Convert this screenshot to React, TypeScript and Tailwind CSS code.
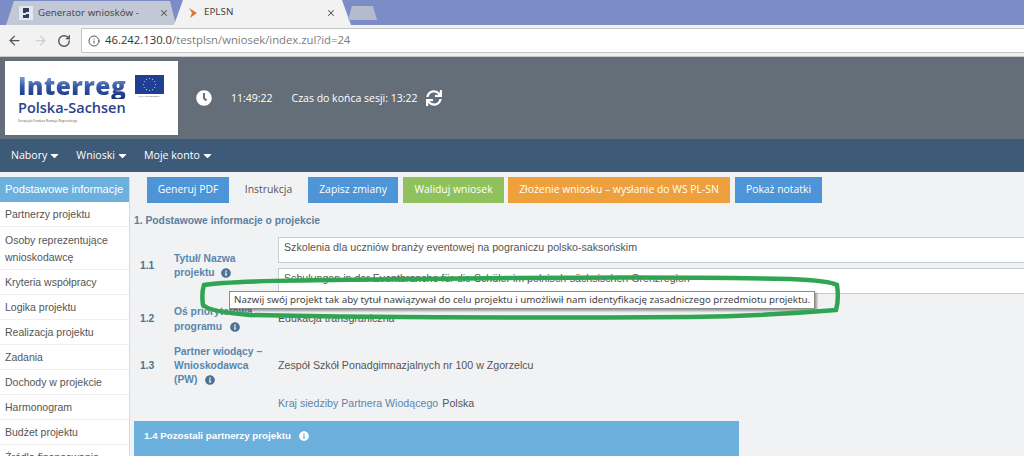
import { ArrowLeft, ArrowRight, Info, RotateCw, X } from 'lucide-react';
import { FaCaretDown, FaClock, FaInfoCircle, FaSync } from 'react-icons/fa';

const menu = ['Nabory', 'Wnioski', 'Moje konto'];

const sideItems = [
  'Partnerzy projektu',
  'Osoby reprezentujące wnioskodawcę',
  'Kryteria współpracy',
  'Logika projektu',
  'Realizacja projektu',
  'Zadania',
  'Dochody w projekcie',
  'Harmonogram',
  'Budżet projektu',
  'Źródła finansowania',
];

function EuFlag() {
  const stars = Array.from({ length: 12 }, (_, i) => {
    const a = (i * Math.PI) / 6;
    return { x: 14.5 + 6 * Math.cos(a), y: 9.5 + 6 * Math.sin(a) };
  });
  return (
    <svg width="29" height="19" viewBox="0 0 29 19" className="block">
      <rect width="29" height="19" fill="#1f3f94" />
      {stars.map((s, i) => (
        <circle key={i} cx={s.x} cy={s.y} r="0.6" fill="#e8d44a" />
      ))}
    </svg>
  );
}

function Logo() {
  return (
    <div className="ml-[5px] flex h-[74px] w-[173px] bg-white pl-[13px] pt-[12px]">
      <div className="w-[110px]">
        <div className="h-[26px] bg-gradient-to-b from-[#9dbbe2] via-[#3a5ca8] to-[#14307f] bg-clip-text text-[24.5px] font-extrabold leading-[26px] tracking-[0.5px] text-transparent [font-family:'Open_Sans',sans-serif]">
          Interreg
        </div>
        <div className="whitespace-nowrap text-[14.5px] font-semibold leading-[17px] text-[#2a4488] [font-family:'Open_Sans',sans-serif]">
          Polska-Sachsen
        </div>
        <div className="mt-[3px] whitespace-nowrap text-[3px] leading-[4px] text-[#555] [font-family:'Open_Sans',sans-serif]">
          Europejski Fundusz Rozwoju Regionalnego
        </div>
      </div>
      <div className="ml-[7px] mt-[2px]">
        <EuFlag />
        <div className="mt-[1px] whitespace-nowrap text-center text-[2.5px] leading-[3px] text-[#555]">UNIA EUROPEJSKA</div>
      </div>
    </div>
  );
}

function Browser() {
  return (
    <>
      <div className="flex h-[25px] items-end bg-[#7b8cc6] pl-[6px] [font-family:'Noto_Sans',sans-serif]">
        <div className="flex h-[24px] w-[170px] items-center whitespace-nowrap bg-[#c3c8d6] pl-[13px] pr-[7px] text-[9.8px] text-[#4a4a4a] [clip-path:polygon(8px_0,calc(100%-6px)_0,100%_100%,0_100%)]">
          <svg width="14" height="14" viewBox="0 0 14 14" className="mr-[5px] shrink-0">
            <rect width="14" height="14" fill="#e4e7ee" />
            <path d="M4 2h6v4H7v2h3v4H4V9h3V7H4z" fill="#2d4263" />
          </svg>
          <span className="flex-1">Generator wniosków -</span>
          <X size={10} strokeWidth={2.5} className="text-[#555]" />
        </div>
        <div className="-ml-[2px] flex h-[25px] w-[177px] items-center bg-[#f2f2f2] pl-[13px] pr-[15px] text-[9.8px] text-[#444] [clip-path:polygon(9px_0,calc(100%-9px)_0,100%_100%,0_100%)]">
          <svg width="12" height="14" viewBox="0 0 12 14" className="mr-[5px] shrink-0">
            <path d="M2 2l8 5-7 5 2-5z" fill="#d9783a" />
          </svg>
          <span className="flex-1">EPLSN</span>
          <X size={10} strokeWidth={2.5} className="text-[#555]" />
        </div>
        <div className="-ml-[3px] mb-[5px] h-[14px] w-[29px] bg-[#b4bbcd] [clip-path:polygon(4px_0,calc(100%-4px)_0,100%_100%,0_100%)]" />
      </div>
      <div className="flex h-[32px] items-center border-b border-[#c9c9c9] bg-[#f2f2f2] pl-[7px]">
        <ArrowLeft size={15} strokeWidth={2} className="text-[#555]" />
        <ArrowRight size={15} strokeWidth={2} className="ml-[11px] text-[#cfcfcf]" />
        <RotateCw size={14} strokeWidth={2.4} className="ml-[9px] text-[#555]" />
        <div className="ml-[10px] flex h-[25px] flex-1 items-center rounded-l-[2px] border border-r-0 border-[#c4c4c4] bg-white pl-[6px] text-[11.3px] [font-family:'Open_Sans',sans-serif]">
          <Info size={12} className="text-[#555]" />
          <span className="ml-[5px] text-[#333]">46.242.130.0</span>
          <span className="text-[#7b7b7b]">/testplsn/wniosek/index.zul?id=24</span>
        </div>
      </div>
    </>
  );
}

function Header() {
  return (
    <>
      <div className="flex h-[82px] items-center bg-[#646e78] text-[10.5px] text-white [font-family:'Open_Sans',sans-serif]">
        <Logo />
        <FaClock size={16} className="ml-[18px]" />
        <span className="ml-[19px] pt-[2px]">11:49:22</span>
        <span className="ml-[19px] pt-[2px]">Czas do końca sesji: 13:22</span>
        <FaSync size={16} className="ml-[9px]" />
      </div>
      <div className="flex h-[33px] items-center gap-[15px] bg-[#3d5a78] pl-[11px] text-[10.6px] text-white [font-family:'Open_Sans',sans-serif]">
        {menu.map((m) => (
          <div key={m} className="flex items-center gap-[1px]">
            {m}
            <FaCaretDown size={13} />
          </div>
        ))}
      </div>
    </>
  );
}

function Sidebar() {
  return (
    <div className="mt-[5px] h-full w-[130px] shrink-0 border-r border-[#d5dbe0] bg-white text-[10.5px] text-[#555] [font-family:'Liberation_Sans',sans-serif]">
      <div className="flex h-[25px] items-center whitespace-nowrap bg-[#6cb0de] pl-[5px] text-[11.2px] text-white">
        Podstawowe informacje
      </div>
      {sideItems.map((s, i) => (
        <div
          key={s}
          className={`flex items-center border-b border-[#f0f0f0] pl-[5px] pr-[4px] pt-[1px] ${i === 1 ? 'h-[43px] leading-[17px]' : 'h-[25px]'}`}
        >
          {s}
        </div>
      ))}
    </div>
  );
}

function Actions() {
  const base = 'flex h-[26px] items-center justify-center text-[10.4px] text-white';
  return (
    <div className="flex pl-[17px] [font-family:'Open_Sans',sans-serif]">
      <div className={`${base} w-[82px] bg-[#4d95d6]`}>Generuj PDF</div>
      <div className="flex h-[26px] w-[79px] items-center justify-center text-[10.4px] text-[#555]">Instrukcja</div>
      <div className={`${base} w-[90px] bg-[#4d95d6]`}>Zapisz zmiany</div>
      <div className={`${base} ml-[5px] w-[101px] bg-[#8fc15c]`}>Waliduj wniosek</div>
      <div className={`${base} ml-[4px] w-[222px] bg-[#eda03c]`}>Złożenie wniosku – wysłanie do WS PL-SN</div>
      <div className={`${base} ml-[5px] w-[87px] bg-[#4d95d6]`}>Pokaż notatki</div>
    </div>
  );
}

function Field({ children }: { children: string }) {
  return (
    <div className="h-[26px] whitespace-nowrap border border-r-0 border-[#c4ccd4] bg-white pl-[5px] pt-[2px] text-[10.65px] leading-[14px] text-[#555]">
      {children}
    </div>
  );
}

function Form() {
  return (
    <div className="ml-[4px] text-[10.3px] [font-family:'Liberation_Sans',sans-serif]">
      <div className="mt-[11px] text-[10.3px] font-bold leading-[14px] text-[#5a7fa0]">
        1. Podstawowe informacje o projekcie
      </div>
      <div className="mt-[9px] grid grid-cols-[40px_104px_1fr] items-center font-bold text-[#5a86ad]">
        <div className="pl-[6px] text-[#4c7396]">1.1</div>
        <div className="leading-[14px]">
          Tytuł/ Nazwa
          <br />
          projektu <FaInfoCircle size={10} className="ml-[4px] inline text-[#4c7396]" />
        </div>
        <div className="flex flex-col gap-[5px] font-normal">
          <Field>Szkolenia dla uczniów branży eventowej na pograniczu polsko-saksońskim</Field>
          <Field>Schulungen in der Eventbranche für die Schüler im polnisch-sächsischen Grenzregion</Field>
        </div>
      </div>
      <div className="mt-[10px] grid grid-cols-[40px_104px_1fr] items-center font-bold text-[#5a86ad]">
        <div className="pl-[6px] text-[#4c7396]">1.2</div>
        <div className="leading-[15px]">
          Oś priorytetowa
          <br />
          programu <FaInfoCircle size={10} className="ml-[5px] inline text-[#4c7396]" />
        </div>
        <div className="text-[10.65px] font-normal text-[#555]">Edukacja transgraniczna</div>
      </div>
      <div className="mt-[11px] grid grid-cols-[40px_104px_1fr] items-center font-bold text-[#5a86ad]">
        <div className="pl-[6px] text-[#4c7396]">1.3</div>
        <div className="leading-[14px]">
          Partner wiodący –
          <br />
          Wnioskodawca
          <br />
          (PW) <FaInfoCircle size={10} className="ml-[5px] inline text-[#4c7396]" />
        </div>
        <div className="text-[10.65px] font-normal text-[#555]">Zespół Szkół Ponadgimnazjalnych nr 100 w Zgorzelcu</div>
      </div>
      <div className="mt-[9px] flex pl-[144px] text-[10.65px] leading-[14px]">
        <span className="text-[#5a86ad]">Kraj siedziby Partnera Wiodącego</span>
        <span className="ml-[4px] text-[#555]">Polska</span>
      </div>
      <div className="mt-[11px] flex h-[40px] w-[605px] items-start bg-[#6cb0de] pl-[10px] pt-[8px] text-[9.75px] font-bold leading-[14px] text-white">
        1.4 Pozostali partnerzy projektu
        <FaInfoCircle size={10} className="ml-[8px] mt-[2px]" />
      </div>
    </div>
  );
}

export default function App() {
  return (
    <div className="relative h-[456px] w-[1024px] overflow-hidden bg-[#f1f2f3]">
      <Browser />
      <Header />
      <div className="flex h-[284px]">
        <Sidebar />
        <div className="min-w-0 flex-1 pt-[5px]">
          <Actions />
          <Form />
        </div>
      </div>
      <div className="absolute left-[229px] top-[291px] h-[18px] w-[586px] whitespace-nowrap border border-[#8b8b8b] bg-white pl-[4px] text-[9.75px] leading-[15px] text-[#444] shadow-[2px_2px_2px_rgba(0,0,0,0.35)] [font-family:'Noto_Sans',sans-serif]">
        Nazwij swój projekt tak aby tytuł nawiązywał do celu projektu i umożliwił nam identyfikację zasadniczego przedmiotu projektu.
      </div>
      <svg className="pointer-events-none absolute left-0 top-0" width="1024" height="456" viewBox="0 0 1024 456" fill="none">
        <path
          d="M204 285C225 281 300 280 420 279C560 277 700 277 790 279C815 280 832 282 837 285C838 292 838 303 836 310C800 313 760 316 690 317C520 318 340 317 250 315C225 313 208 310 203 305C202 298 202 291 204 285Z"
          stroke="#2fa552"
          strokeWidth="4.5"
        />
      </svg>
    </div>
  );
}
